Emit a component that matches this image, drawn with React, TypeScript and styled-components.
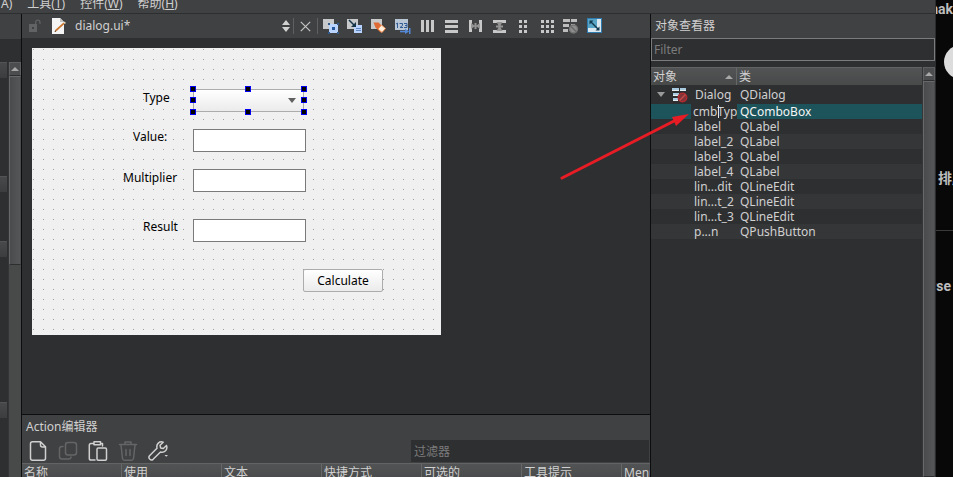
import React from "react";
import styled, { createGlobalStyle } from "styled-components";

const c = {
  bar: "#404142",
  base: "#2e2f31",
  alt: "#353638",
  line: "#0c0d0e",
  text: "#d0d0d0",
  dim: "#7c7c7c",
  select: "#1d545c",
};

const GlobalStyle = createGlobalStyle`
  * { box-sizing: border-box; }
  html, body, #root { height: 100%; }
  body {
    margin: 0;
    overflow: hidden;
    background: #080808;
    color: ${c.text};
    font: 12px/16px "Noto Sans", "Noto Sans CJK SC", sans-serif;
  }
  button, input, select { font: inherit; color: inherit; margin: 0; padding: 0; border: 0; border-radius: 0; outline: 0; }
  button { background: none; }
  svg { display: block; flex: none; }
`;

const Desktop = styled.div`
  position: relative;
  display: flex;
  height: 100%;
`;

const Ide = styled.div`
  flex: 1;
  min-width: 0;
  display: flex;
  flex-direction: column;
  background: ${c.bar};
  border-right: 1px solid #2b2c2d;
`;

const MenuBar = styled.nav`
  flex: none;
  display: flex;
  align-items: flex-end;
  gap: 15px;
  height: 14px;
  overflow: hidden;
  padding: 0 0 1px 1px;
  border-bottom: 1px solid #2d2e2f;
`;

const MenuItem = styled.button`
  flex: none;
  line-height: 16px;
  white-space: nowrap;
`;

const Body = styled.div`
  flex: 1;
  min-height: 0;
  display: flex;
`;

const Sidebar = styled.aside`
  flex: none;
  width: 22px;
  display: flex;
  flex-direction: column;
  background: ${c.base};
  border-right: 1px solid ${c.line};
`;

const SidebarHead = styled.div`
  height: 25px;
  margin-bottom: 23px;
  background: ${c.bar};
`;

const SidebarBody = styled.div`
  flex: 1;
  display: flex;
  justify-content: space-between;
`;

const Groups = styled.div`
  width: 7px;
`;

const Group = styled.div<{ $space: number }>`
  height: 16px;
  margin-bottom: ${(p) => p.$space}px;
  background: linear-gradient(#48494a, #3c3d3e);
  border-top: 1px solid #525354;
`;

const ScrollTrack = styled.div`
  flex: none;
  width: 13px;
  display: flex;
  flex-direction: column;
  background: #484949;
  border-left: 1px solid #343536;
`;

const ScrollButton = styled.button`
  flex: none;
  display: grid;
  place-items: center;
  height: 14px;
  background: #4c4d4e;
  border: 1px solid #5e5f60;
  border-bottom-color: #2d2e2f;
`;

const ScrollThumb = styled.div<{ $size?: number }>`
  flex: ${(p) => (p.$size ? `0 0 ${p.$size}px` : "1")};
  background: linear-gradient(90deg, #4a4b4c, #555657);
  border: 1px solid #686969;
  border-right-color: #4a4b4c;
  border-bottom-color: #2d2e2f;
`;

const Center = styled.main`
  flex: 1;
  min-width: 0;
  display: flex;
  flex-direction: column;
  border-right: 1px solid ${c.line};
`;

const EditorBar = styled.header`
  flex: none;
  display: flex;
  align-items: center;
  height: 24px;
  padding-left: 6px;
  overflow: hidden;
`;

const FilePicker = styled.button`
  display: flex;
  align-items: center;
  width: 238px;
  margin: 0 3px 0 11px;
  text-align: left;
`;

const FileName = styled.span`
  flex: 1;
  margin-left: 9px;
`;

const Divider = styled.i`
  flex: none;
  width: 1px;
  height: 16px;
  background: #5f6061;
`;

const CloseButton = styled.button`
  display: grid;
  place-items: center;
  width: 23px;
  height: 20px;
`;

const Tools = styled.div`
  display: flex;
  gap: 8px;
  margin-left: 5px;
`;

const ToolButton = styled.button`
  flex: none;
  width: 16px;
  height: 16px;
`;

const Canvas = styled.section`
  flex: 1;
  min-height: 0;
  overflow: hidden;
  background: ${c.base};
  padding: 10px;
`;

const Form = styled.div`
  position: relative;
  width: 409px;
  height: 287px;
  color: #000;
  background: conic-gradient(from 0deg at 1px 1px, #0000 75%, #a0a0a0 0) 1px 1px / 10px 10px #f0f0f0;
`;

type Place = { $x: number; $y: number };

const FormLabel = styled.label<Place>`
  position: absolute;
  left: ${(p) => p.$x}px;
  top: ${(p) => p.$y}px;
`;

const LineEdit = styled.input<Place>`
  position: absolute;
  left: ${(p) => p.$x}px;
  top: ${(p) => p.$y}px;
  width: 113px;
  height: 23px;
  padding: 0 3px;
  background: #fff;
  border: 1px solid #7a7a7a;
`;

const ComboFrame = styled.div<Place>`
  position: absolute;
  left: ${(p) => p.$x}px;
  top: ${(p) => p.$y}px;
  width: 111px;
  height: 23px;
`;

const Combo = styled.select`
  appearance: none;
  width: 100%;
  height: 100%;
  background: linear-gradient(#fff, #ebebeb);
  border: 1px solid #acacac;
`;

const ComboArrow = styled.svg`
  position: absolute;
  right: 8px;
  top: 9px;
`;

const Handle = styled.i<{ $left: number; $top: number }>`
  position: absolute;
  left: ${(p) => p.$left}px;
  top: ${(p) => p.$top}px;
  width: 6px;
  height: 6px;
  margin: -3px;
  background: #000;
  border: 1px solid #0000f0;
`;

const PushButton = styled.button<Place>`
  position: absolute;
  left: ${(p) => p.$x}px;
  top: ${(p) => p.$y}px;
  width: 80px;
  height: 23px;
  background: linear-gradient(#fff, #ebebeb);
  border: 1px solid #acacac;
  border-radius: 2px;
`;

const Dock = styled.section`
  flex: none;
  height: 63px;
  overflow: hidden;
  border-top: 1px solid ${c.line};
`;

const DockTitle = styled.h2`
  margin: 0;
  padding: 4px 4px;
  font-size: 12px;
  font-weight: 400;
  line-height: 16px;
`;

const ActionBar = styled.div`
  display: flex;
  align-items: center;
  gap: 10px;
  height: 24px;
  padding: 0 1px 0 6px;
`;

const ActionButton = styled.button`
  flex: none;
  width: 20px;
  height: 20px;
  &:disabled { color: #646566; }
`;

const ActionFilter = styled.input`
  flex: 0 1 238px;
  min-width: 0;
  height: 22px;
  margin-left: auto;
  padding-left: 3px;
  background: ${c.base};
  &::placeholder { color: ${c.dim}; opacity: 1; }
`;

const ActionTable = styled.table`
  table-layout: fixed;
  border-collapse: separate;
  border-spacing: 0;
  width: 100%;
`;

const HeadCell = styled.th<{ $width?: number }>`
  width: ${(p) => (p.$width ? `${p.$width}px` : "auto")};
  height: 18px;
  padding: 0 2px;
  overflow: hidden;
  white-space: nowrap;
  font-weight: 400;
  line-height: 16px;
  text-align: left;
  background: linear-gradient(#525354, #484949);
  border-top: 1px solid #626363;
  border-right: 1px solid #666767;
  &:last-child { border-right: 0; }
`;

const Inspector = styled.aside`
  flex: none;
  width: 284px;
  display: flex;
  flex-direction: column;
  background: ${c.base};
`;

const InspectorTitle = styled.h2`
  margin: 0;
  padding: 4px;
  font-size: 12px;
  font-weight: 400;
  line-height: 16px;
  background: ${c.bar};
`;

const ObjectFilter = styled.input`
  height: 23px;
  margin-bottom: 6px;
  padding: 0 2px;
  background: ${c.base};
  border: 1px solid #7a7b7b;
  &::placeholder { color: #7c7c7c; opacity: 1; }
`;

const TreeArea = styled.div`
  flex: 1;
  min-height: 0;
  display: flex;
`;

const TreeView = styled.div`
  flex: 1;
  min-width: 0;
`;

const Tree = styled.table`
  width: 100%;
  table-layout: fixed;
  border-collapse: separate;
  border-spacing: 0;
`;

const SortHead = styled.span`
  display: flex;
  align-items: center;
  justify-content: space-between;
  padding-right: 1px;
`;

const Row = styled.tr<{ $tone?: "alt" | "selected" }>`
  color: ${(p) => (p.$tone === "selected" ? "#f4f4f4" : "inherit")};
  background: ${(p) => (p.$tone === "selected" ? c.select : p.$tone === "alt" ? c.alt : "none")};
`;

const Cell = styled.td<{ $indent?: boolean }>`
  height: 15px;
  padding: 0 0 0 ${(p) => (p.$indent ? 43 : 3)}px;
  overflow: hidden;
  white-space: nowrap;
  line-height: 15px;
`;

const EditCell = styled.td`
  height: 15px;
  padding: 0 0 0 40px;
`;

const RootCell = styled(Cell)`
  height: 19px;
  padding: 2px 0 2px 3px;
`;

const RootItem = styled.span`
  display: flex;
  align-items: center;
  gap: 7px;
  height: 15px;
  padding-left: 3px;
`;

const Editing = styled.div`
  position: relative;
  overflow: hidden;
  color: ${c.text};
  background: ${c.base};
`;

const NameInput = styled.input`
  display: block;
  width: 60px;
  height: 15px;
  padding-left: 2px;
  background: none;
`;

const Caret = styled.i`
  position: absolute;
  left: 27px;
  top: 1px;
  width: 1px;
  height: 13px;
  background: #e6e6e6;
`;

const Behind = styled.aside`
  flex: none;
  width: 17px;
  overflow: hidden;
  color: #bdbdbd;
  font: 700 14px/18px Roboto, "Noto Sans CJK SC", sans-serif;
`;

const Clip = styled.div<{ $end?: boolean; $inset?: number; $space: number }>`
  display: flex;
  justify-content: ${(p) => (p.$end ? "flex-end" : "flex-start")};
  padding: 0 ${(p) => (p.$inset ?? 0)}px 0 ${(p) => (p.$end ? 0 : 2)}px;
  margin-bottom: ${(p) => p.$space}px;
  white-space: nowrap;
`;

const Avatar = styled.div`
  width: 34px;
  height: 34px;
  margin: 0 0 90px 8px;
  border-radius: 50%;
  background: #dcdcdc;
`;

const Rule = styled.hr`
  margin: 0 0 46px;
  border: 0;
  border-top: 1px solid #3a3a3a;
`;

const Pointer = styled.svg`
  position: absolute;
  left: 560px;
  top: 112px;
  pointer-events: none;
`;

const Up = () => (
  <svg width="8" height="4" viewBox="0 0 8 4"><path d="M0 4L4 0l4 4z" fill="#a8a8a8" /></svg>
);

const Down = () => (
  <svg width="8" height="5" viewBox="0 0 8 5"><path d="M0 0h8L4 5z" fill="#9a9a9a" /></svg>
);

const Lock = () => (
  <svg width="13" height="14" viewBox="0 0 13 14" fill="none">
    <path d="M7.7 6V3.5Q7.7 1 9.8 1T12 3.5V5" stroke="#626364" strokeWidth="1.2" />
    <path d="M1 5h8v8H1z" fill="#626364" />
    <path d="M4 8h2v2H4z" fill="#404142" />
  </svg>
);

const FileIcon = () => (
  <svg width="14" height="16" viewBox="0 0 14 16">
    <path d="M0 0h8l4 4v12H0z" fill="#f4f4f4" />
    <path d="M8 0v4h4z" fill="#c4c4c4" />
    <path d="M3 13.500l.7-2L11.500 4.500l1.200 1.300-7.700 7z" fill="#c9752d" />
    <path d="M11.500 4.500l1-1 1.500 1.500-1.300 1z" fill="#e8d9b8" />
    <path d="M2.500 14l.7-1.700 1.200 1.200z" fill="#553218" />
  </svg>
);

const UpDown = () => (
  <svg width="8" height="12" viewBox="0 0 8 12" fill="#d2d2d2"><path d="M0 5l4-5 4 5zM0 7h8l-4 5z" /></svg>
);

const Cross = () => (
  <svg width="11" height="11" viewBox="0 0 11 11" stroke="#c4c4c4" strokeWidth="1.2"><path d="M.8.8l9.4 9.4M10.2.8L.8 10.2" /></svg>
);

const gray = "#c8c8c8";

const toolIcons: [string, React.ReactNode][] = [
  ["编辑控件", <>
    <path d="M0 1h11v10H0z" fill="#c8c9cb" /><path d="M6 6h9v9H6z" fill="#b9d3ff" />
    <path d="M9 9h3v3H9z" fill="#25559b" />
    <path d="M5 5h2v2H5zM14 5h2v2h-2zM5 14h2v2H5zM14 14h2v2h-2z" fill="#315989" />
  </>],
  ["编辑信号/槽", <>
    <path d="M0 1h11v10H0z" fill="#c8c9cb" /><path d="M7 7h8v8H7z" fill="#b9d3ff" />
    <path d="M9 10.5h5M9 12.5h5" stroke="#6086c0" />
    <path d="M2 2l6 6" stroke="#15364a" strokeWidth="1.5" /><path d="M9 9V4L4 9z" fill="#15364a" />
  </>],
  ["编辑伙伴", <>
    <path d="M0 1h11v10H0z" fill="#c8c9cb" />
    <path d="M2.500 4.500h5l6 6-4 4-5-5z" fill="#df6a35" /><path d="M10.500 7l4 3.500-3.500 4-4-3.500z" fill="#fff0df" stroke="#f08a4c" />
  </>],
  ["编辑 Tab 顺序", <>
    <path d="M0 1h13v11H0z" fill="#b9c6d6" />
    <path d="M2.500 10V5L1 6M4.500 5.500h3v2l-2.500 2h3M9 5.500h3v4H9M10 7.500h2" fill="none" stroke="#315b94" />
    <path d="M5 13.500h6" stroke="#5489d8" strokeWidth="1.6" /><path d="M10 10.500l4 3-4 2.500zM14 10h1.500v6H14z" fill="#5489d8" />
  </>],
  ["水平布局", <path d="M2 2h3v12H2zM7 2h3v12H7zM12 2h3v12h-3z" fill={gray} />],
  ["垂直布局", <path d="M2 2h13v3H2zM2 7h13v3H2zM2 12h13v3H2z" fill={gray} />],
  ["水平分裂器", <>
    <path d="M2 2h3v12H2zM12 2h3v12h-3z" fill={gray} />
    <path d="M4 5l3.500 2.500V5h2v2.500L13 5v6L9.500 8.500V11h-2V8.500L4 11z" fill="#949494" />
  </>],
  ["垂直分裂器", <>
    <path d="M2 2h13v3H2zM2 12h13v3H2z" fill={gray} />
    <path d="M5.500 4h6L9.500 7.500H12v2H9.500L11.500 13h-6l2-3.500H5v-2h2.500z" fill="#949494" />
  </>],
  ["窗体布局", <path d="M4 2h3v3H4zM9 2h3v3H9zM4 7h3v3H4zM9 7h3v3H9zM4 12h3v3H4zM9 12h3v3H9z" fill={gray} />],
  ["栅格布局", <path d="M2 2h3v3H2zM7 2h3v3H7zM12 2h3v3h-3zM2 7h3v3H2zM7 7h3v3H7zM12 7h3v3h-3zM2 12h3v3H2zM7 12h3v3H7zM12 12h3v3h-3z" fill={gray} />],
  ["打破布局", <>
    <path d="M0 1h7v3H0zM8 1h6v3H8zM0 6h6v3H0zM8 6h4v2H8zM0 11h5v3H0z" fill="#bdbdbd" />
    <circle cx="10.500" cy="11" r="4" fill="#8d8d8d" stroke="#747474" strokeWidth="1.4" /><path d="M8 8.500l5 5" stroke="#686868" strokeWidth="1.4" />
  </>],
  ["调整大小", <>
    <path d="M0 0h15v15H0z" fill="#2e7bb0" /><path d="M1 1h9v9H1z" fill="#58a5c5" />
    <path d="M10 1h4v13H1v-4h9z" fill="#dbe8f0" />
    <path d="M4 4l7 7" stroke="#123a50" strokeWidth="1.4" /><path d="M2.500 2.500h4l-4 4zM12.500 12.500h-4l4-4z" fill="#123a50" />
  </>],
];

const line = { fill: "none", stroke: "currentColor", strokeWidth: 1.5, strokeLinejoin: "round" as const, strokeLinecap: "round" as const };

const actionIcons: [string, boolean, React.ReactNode][] = [
  ["新建", false, <path d="M4.5.8h8l5 5v11.400q0 2-2 2h-11q-2 0-2-2V2.800q0-2 2-2zM12.500 1v3q0 2 2 2h3" />],
  ["复制", true, <><rect x="7.500" y="1.500" width="11" height="12.500" rx="2.500" /><path d="M5 5.500H4Q1.500 5.500 1.500 8v7.500Q1.500 18 4 18h6.500q2.500 0 2.500-2" /></>],
  ["粘贴", false, <><path d="M5.500 2.500H3q-1.700 0-1.700 1.700v13q0 1.900 1.700 1.900h4M13 2.500h1.500V5M6 .8h6.500v3H6z" /><rect x="9" y="7" width="9.500" height="12.200" rx="1.200" /></>],
  ["删除", true, <path d="M1.500 3.500h17M7 3V1h6v2M3 4l1.500 13.500q.2 1.700 2 1.700h7q1.800 0 2-1.700L17 4M8 8.500v6M12 8.500v6" />],
  ["配置", false, <><path d="M18.500 4.500l-3.200 3-2.700-.6-.6-2.700 3.200-3C11.500-.1 8 3 9 7.200L1.500 14.700q-1.300 1.600.2 3.300 1.700 1.700 3.400.3L12.500 11c4 1 7.500-2.300 6-6.500z" /><path d="M16.500 14h3.500l-1.700 1.800z" fill="currentColor" stroke="none" /></>],
];

const handles: [number, number][] = [
  [0, 0], [55, 0], [111, 0],
  [0, 11], [111, 11],
  [0, 23], [55, 23], [111, 23],
];

const objects: [string, string][] = [
  ["label", "QLabel"], ["label_2", "QLabel"], ["label_3", "QLabel"], ["label_4", "QLabel"],
  ["lin...dit", "QLineEdit"], ["lin...t_2", "QLineEdit"], ["lin...t_3", "QLineEdit"], ["p...n", "QPushButton"],
];

const LayoutIcon = () => (
  <svg width="16" height="16" viewBox="0 0 16 16">
    <path d="M0 1h7v3H0zM8 1h6v3H8zM1 6h6v3H1zM8 6h4v3H8zM1 11h5v3H1z" fill="#a9cbe0" />
    <path d="M0 3h7v1H0zM8 3h6v1H8zM1 8h6v1H1zM1 13h5v1H1z" fill="#e6eef2" />
    <circle cx="10.500" cy="10.500" r="4.200" fill="#813438" stroke="#b02b2f" strokeWidth="1.500" />
    <path d="M7.500 13.500l6-6" stroke="#c44a4a" strokeWidth="1.500" />
  </svg>
);

export default function App() {
  return (
    <Desktop>
      <GlobalStyle />
      <Ide>
        <MenuBar>
          <MenuItem>A)</MenuItem>
          <MenuItem>工具(<u>T</u>)</MenuItem>
          <MenuItem>控件(<u>W</u>)</MenuItem>
          <MenuItem>帮助(<u>H</u>)</MenuItem>
        </MenuBar>
        <Body>
          <Sidebar>
            <SidebarHead />
            <SidebarBody>
              <Groups>
                <Group $space={98} />
                <Group $space={49} />
                <Group $space={145} />
                <Group $space={0} />
              </Groups>
              <ScrollTrack>
                <ScrollButton aria-label="向上滚动"><Up /></ScrollButton>
                <ScrollThumb $size={189} />
              </ScrollTrack>
            </SidebarBody>
          </Sidebar>

          <Center>
            <EditorBar>
              <Lock />
              <FilePicker>
                <FileIcon />
                <FileName>dialog.ui*</FileName>
                <UpDown />
              </FilePicker>
              <Divider />
              <CloseButton aria-label="关闭"><Cross /></CloseButton>
              <Divider />
              <Tools>
                {toolIcons.map(([name, art]) => (
                  <ToolButton key={name} aria-label={name}>
                    <svg width="16" height="16" viewBox="0 0 16 16">{art}</svg>
                  </ToolButton>
                ))}
              </Tools>
            </EditorBar>

            <Canvas>
              <Form>
                <FormLabel htmlFor="type" $x={111} $y={42}>Type</FormLabel>
                <ComboFrame $x={161} $y={41}>
                  <Combo id="type" />
                  <ComboArrow width="8" height="5" viewBox="0 0 8 5"><path d="M0 0h8L4 5z" fill="#606060" /></ComboArrow>
                  {handles.map(([left, top]) => <Handle key={`${left}-${top}`} $left={left} $top={top} />)}
                </ComboFrame>
                <FormLabel htmlFor="value" $x={101} $y={81}>Value:</FormLabel>
                <LineEdit id="value" $x={161} $y={81} />
                <FormLabel htmlFor="multiplier" $x={91} $y={122}>Multiplier</FormLabel>
                <LineEdit id="multiplier" $x={161} $y={121} />
                <FormLabel htmlFor="result" $x={111} $y={171}>Result</FormLabel>
                <LineEdit id="result" $x={161} $y={171} />
                <PushButton $x={271} $y={221}>Calculate</PushButton>
              </Form>
            </Canvas>

            <Dock>
              <DockTitle>Action编辑器</DockTitle>
              <ActionBar>
                {actionIcons.map(([name, off, art]) => (
                  <ActionButton key={name} aria-label={name} disabled={off}>
                    <svg width="20" height="20" viewBox="0 0 20 20" {...line}>{art}</svg>
                  </ActionButton>
                ))}
                <ActionFilter aria-label="过滤器" placeholder="过滤器" />
              </ActionBar>
              <ActionTable>
                <thead>
                  <tr>
                    {["名称", "使用", "文本", "快捷方式", "可选的", "工具提示"].map((t) => (
                      <HeadCell key={t} $width={100}>{t}</HeadCell>
                    ))}
                    <HeadCell>Menu</HeadCell>
                  </tr>
                </thead>
              </ActionTable>
            </Dock>
          </Center>

          <Inspector>
            <InspectorTitle>对象查看器</InspectorTitle>
            <ObjectFilter aria-label="Filter" placeholder="Filter" />
            <TreeArea>
              <TreeView>
                <Tree>
                  <thead>
                    <tr>
                      <HeadCell $width={86}><SortHead>对象<Up /></SortHead></HeadCell>
                      <HeadCell>类</HeadCell>
                    </tr>
                  </thead>
                  <tbody>
                    <Row>
                      <RootCell><RootItem><Down /><LayoutIcon />Dialog</RootItem></RootCell>
                      <RootCell>QDialog</RootCell>
                    </Row>
                    <Row $tone="selected">
                      <EditCell>
                        <Editing>
                          <NameInput aria-label="对象" defaultValue="cmbType" />
                          <Caret />
                        </Editing>
                      </EditCell>
                      <Cell>QComboBox</Cell>
                    </Row>
                    {objects.map(([name, type], i) => (
                      <Row key={name} $tone={i % 2 ? "alt" : undefined}>
                        <Cell $indent>{name}</Cell>
                        <Cell>{type}</Cell>
                      </Row>
                    ))}
                  </tbody>
                </Tree>
              </TreeView>
              <ScrollTrack>
                <ScrollButton aria-label="向上滚动"><Up /></ScrollButton>
                <ScrollThumb />
              </ScrollTrack>
            </TreeArea>
          </Inspector>
        </Body>
      </Ide>

      <Behind>
        <Clip $end $space={27}>mak</Clip>
        <Avatar />
        <Clip $space={43}>排,</Clip>
        <Rule />
        <Clip $end $inset={2} $space={0}>rse</Clip>
      </Behind>

      <Pointer width="132" height="70" viewBox="0 0 132 70">
        <path d="M2 66L118 7" stroke="#e81c24" strokeWidth="3" strokeLinecap="round" />
        <path d="M129 2L116 14l-4-9z" fill="#e81c24" />
      </Pointer>
    </Desktop>
  );
}
